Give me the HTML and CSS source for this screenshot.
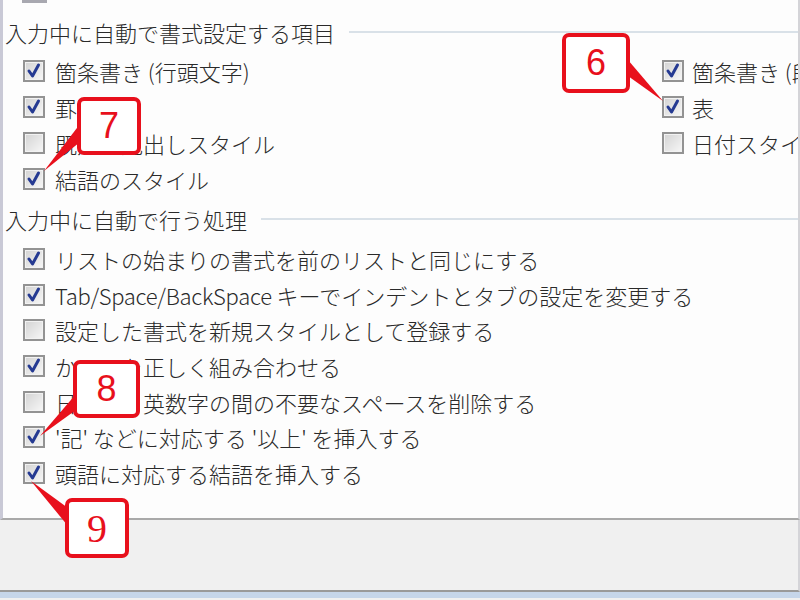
FILE: index.html
```html
<html><head>
<meta charset="utf-8">
<link rel="stylesheet" href="styles.css">
</head>
<body>

<div class="panel">
    <div class="stub"></div>

    <div class="group-title"><span>入力中に自動で書式設定する項目</span><div class="rule"></div></div>
    <div class="cols">
        <div class="col">
            <div class="row"><span class="box on"></span>箇条書き (行頭文字)</div>
            <div class="row"><span class="box on"></span>罫線</div>
            <div class="row"><span class="box"></span>既定の見出しスタイル</div>
            <div class="row"><span class="box on"></span>結語のスタイル</div>
        </div>
        <div class="col right">
            <div class="row"><span class="box on"></span>箇条書き (段落番号)</div>
            <div class="row"><span class="box on"></span>表</div>
            <div class="row"><span class="box"></span>日付スタイル</div>
        </div>
    </div>

    <div class="group-title second"><span>入力中に自動で行う処理</span><div class="rule"></div></div>
    <div class="col list">
        <div class="row"><span class="box on"></span>リストの始まりの書式を前のリストと同じにする</div>
        <div class="row"><span class="box on"></span><span class="latin">Tab/Space/BackSpace</span>&nbsp;キーでインデントとタブの設定を変更する</div>
        <div class="row"><span class="box"></span>設定した書式を新規スタイルとして登録する</div>
        <div class="row"><span class="box on"></span>かっこを正しく組み合わせる</div>
        <div class="row"><span class="box"></span>日本語と英数字の間の不要なスペースを削除する</div>
        <div class="row"><span class="box on"></span>'記' などに対応する '以上' を挿入する</div>
        <div class="row"><span class="box on"></span>頭語に対応する結語を挿入する</div>
    </div>
</div>
<div class="footer"></div>
<div class="taskbar"></div>

<!-- callout tails -->
<svg class="tails" width="800" height="600">
    <polygon points="628,60 628,76 663,101" />
    <polygon points="80,124 80,142 44,171" />
    <polygon points="76,394 76,410 40,436" />
    <polygon points="68,508 68,526 31,481" />
</svg>
<div class="callout c6">6</div>
<div class="callout c7">7</div>
<div class="callout c8">8</div>
<div class="callout c9">9</div>

</body>
</html>
```

FILE: styles.css
```css
* {
    box-sizing: border-box;
}

body {
    margin: 0;
    width: 800px;
    height: 600px;
    overflow: hidden;
    position: relative;
    background: #f0f0f0;
    font-family: "Noto Sans CJK JP", sans-serif;
    font-size: 22px;
    font-weight: 300;
    color: #2a2a2a;
}

.panel {
    height: 520px;
    background: #fdfdfd;
    border-left: 3px solid #c9c9d6;
    border-right: 2px solid #d4d4d8;
    border-bottom: 2px solid #a9a9a9;
    padding-left: 2px;
    overflow: hidden;
}

.stub {
    width: 25px;
    height: 3px;
    margin-left: 17px;
    background: #a8a8b0;
}

.group-title {
    display: flex;
    align-items: center;
    height: 36px;
    margin-top: 11px;
    white-space: nowrap;
}

.group-title.second {
    margin-top: 4px;
}

.rule {
    flex: 1;
    height: 2px;
    margin-left: 14px;
    background: #d9e1e8;
}

.cols {
    display: flex;
    margin-top: 3px;
}

.col {
    padding-left: 18px;
}

.col.right {
    padding-left: 0;
    margin-left: auto;
    width: 136px;
    white-space: nowrap;
}

.list {
    margin-top: 4px;
}

.row {
    display: flex;
    align-items: center;
    height: 36px;
    white-space: nowrap;
}

.list .row {
    height: 35.7px;
}

.box {
    flex: none;
    width: 22px;
    height: 22px;
    margin-right: 10px;
    border: 2px solid #939393;
    background: linear-gradient(135deg, #d3d3d3, #f7f7f7);
    box-shadow: inset 0 0 0 1px #f2f2f2;
}

.right .box {
    margin-right: 8px;
}

.box.on {
    background-image: url("data:image/svg+xml;utf8,<svg xmlns='http://www.w3.org/2000/svg' width='18' height='18'><path d='M4 9 L7.5 14 L13.5 3' fill='none' stroke='%23253a92' stroke-width='3' stroke-linecap='round' stroke-linejoin='round'/></svg>"), linear-gradient(135deg, #d3d3d3, #f7f7f7);
    background-repeat: no-repeat;
}

.latin {
    font-size: 22px;
    letter-spacing: -0.3px;
}

.footer {
    height: 72px;
    border-right: 2px solid #d4d4d8;
    border-bottom: 2px solid #9a9a9a;
}

.taskbar {
    height: 6px;
    background: #c6d6ea;
}

.tails {
    position: absolute;
    left: 0;
    top: 0;
}

.tails polygon {
    fill: #e8101c;
}

.callout {
    position: absolute;
    display: flex;
    align-items: center;
    justify-content: center;
    background: #fff;
    border: 4px solid #e8101c;
    border-radius: 7px;
    color: #e8101c;
    font-family: "Liberation Sans", sans-serif;
    font-size: 36px;
    font-weight: normal;
}

.c6 { left: 562px; top: 33px; width: 68px; height: 60px; }
.c7 { left: 77px; top: 97px; width: 64px; height: 58px; }
.c8 { left: 73px; top: 360px; width: 67px; height: 58px; }
.c9 { left: 65px; top: 498px; width: 64px; height: 60px; font-family: "Liberation Serif", serif; font-size: 40px; }
```
